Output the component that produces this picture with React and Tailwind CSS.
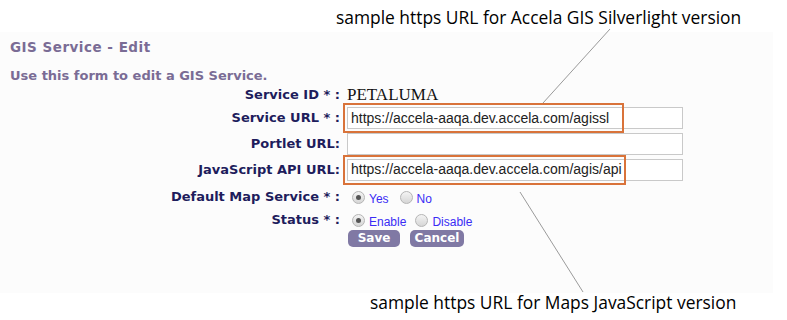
import React from "react";

const verdana = { fontFamily: '"DejaVu Sans", Verdana, sans-serif' };

// * FORM ROW
const Row = ({ label, height, children }) => (
  <div className={`flex items-center ${height}`}>
    <div
      className="w-[341px] shrink-0 pr-[1px] text-right text-[13px] font-bold text-[#1e1d5c]"
      style={verdana}
    >
      {label}
    </div>
    <div className="flex items-center pl-[6px]">{children}</div>
  </div>
);

const Radio = ({ checked, label, gap }) => (
  <label className={`flex items-center gap-[4px] ${gap}`}>
    <span className="flex h-[13px] w-[13px] items-center justify-center rounded-full border border-[#b5b5b5] bg-gradient-to-b from-[#f4f4f4] to-[#d6d6d6]">
      {checked && <span className="h-[5px] w-[5px] rounded-full bg-[#555]" />}
    </span>
    <span className="mt-[4px] text-[12px] text-[#3a2cf5] font-['Liberation_Sans',Arial,sans-serif]">
      {label}
    </span>
  </label>
);

const TextBox = ({ value, highlight, width }) => (
  <div className="relative">
    <div className="flex h-[22px] w-[336px] items-center border border-[#c9c9c9] bg-white px-[3px] text-[14px] text-[#222] font-['Liberation_Sans',Arial,sans-serif]">
      {value}
    </div>
    {highlight && (
      <div
        className={`pointer-events-none absolute left-[-4px] top-[-4px] h-[30px] ${width} border-2 border-[#d9733a]`}
      />
    )}
  </div>
);

const Button = ({ children, width }) => (
  <button
    className={`h-[17px] ${width} rounded-[5px] bg-[#8079a4] text-[12px] leading-[17px] font-bold text-white`}
    style={verdana}
  >
    {children}
  </button>
);

export default function App() {
  return (
    <div className="relative h-[320px] w-[787px] overflow-hidden bg-white font-['Open_Sans',sans-serif]">
      {/* top caption */}
      <div className="h-[32px] pl-[336px] pt-[7px] text-[17.4px] leading-[20px] text-black">
        sample https URL for Accela GIS Silverlight version
      </div>

      {/* form panel */}
      <div className="h-[261px] w-[773px] bg-[#fcfcfc] pt-[7px]">
        <div
          className="pl-[10px] text-[13.5px] leading-[16px] tracking-[0.5px] font-bold text-[#7a6c95]"
          style={verdana}
        >
          GIS Service - Edit
        </div>
        <div
          className="mt-[13px] pl-[10px] text-[13px] leading-[16px] font-bold text-[#7a6c95]"
          style={verdana}
        >
          Use this form to edit a GIS Service.
        </div>

        <div className="mt-[1px] flex flex-col">
          <Row label="Service ID * :" height="h-[20px]">
            <span className="text-[17px] text-[#111] font-['Liberation_Serif',serif]">
              PETALUMA
            </span>
          </Row>
          <Row label="Service URL * :" height="h-[26px]">
            <TextBox
              value="https://accela-aaqa.dev.accela.com/agissl"
              highlight
              width="w-[281px]"
            />
          </Row>
          <Row label="Portlet URL:" height="h-[25px]">
            <TextBox value="" />
          </Row>
          <Row label="JavaScript API URL:" height="h-[27px]">
            <TextBox
              value="https://accela-aaqa.dev.accela.com/agis/api"
              highlight
              width="w-[283px]"
            />
          </Row>
          <Row label="Default Map Service * :" height="h-[28px]">
            <div className="pl-[5px] flex">
              <Radio checked label="Yes" gap="mr-[11px]" />
              <Radio label="No" />
            </div>
          </Row>
          <Row label="Status * :" height="h-[18px]">
            <div className="pl-[5px] flex">
              <Radio checked label="Enable" gap="mr-[9px]" />
              <Radio label="Disable" />
            </div>
          </Row>
          <div className="mt-[1px] flex gap-[10px] pl-[348px]">
            <Button width="w-[52px]">Save</Button>
            <Button width="w-[54px]">Cancel</Button>
          </div>
        </div>
      </div>

      {/* bottom caption */}
      <div className="pl-[370px] text-[17.4px] leading-[18px] text-black">
        sample https URL for Maps JavaScript version
      </div>

      {/* leader lines */}
      <svg
        className="pointer-events-none absolute left-0 top-0"
        width="787"
        height="320"
      >
        <line x1="610" y1="29" x2="543" y2="103" stroke="#9a9a9a" strokeWidth="1" />
        <line x1="520" y1="192" x2="583" y2="292" stroke="#9a9a9a" strokeWidth="1" />
      </svg>
    </div>
  );
}
